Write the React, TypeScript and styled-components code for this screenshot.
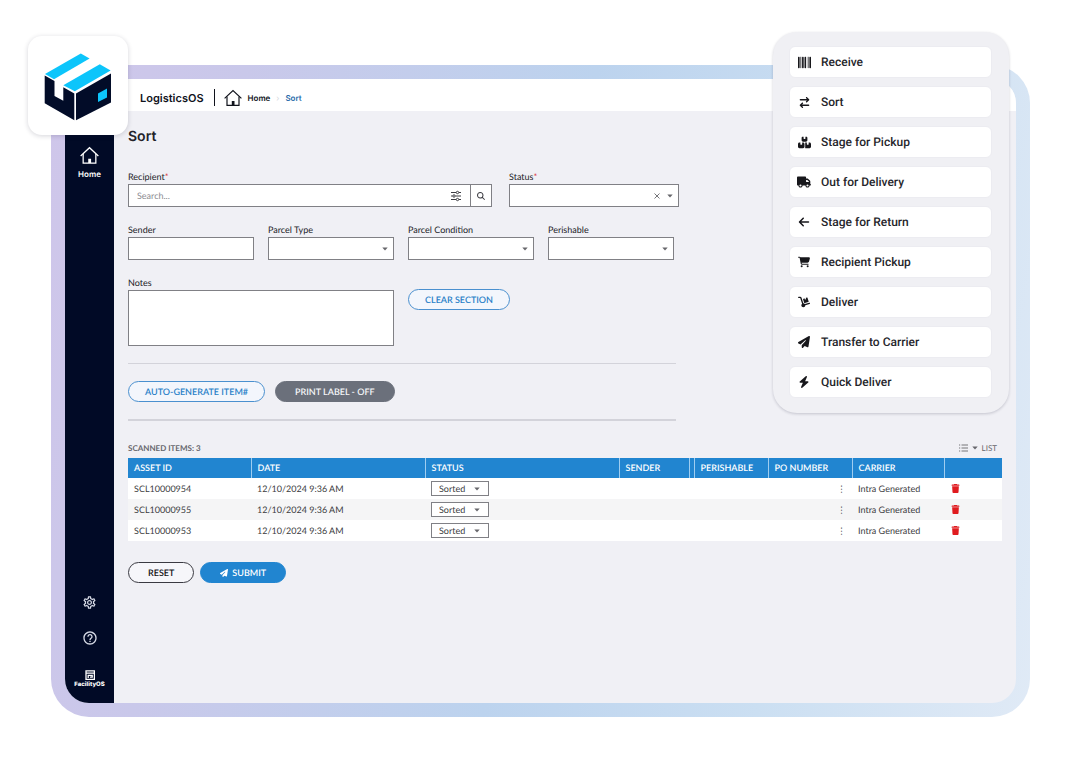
import React from "react";
import styled, { createGlobalStyle } from "styled-components";
import {
  FaArrowLeft,
  FaArrowRightArrowLeft,
  FaBarcode,
  FaBolt,
  FaBoxesStacked,
  FaCartShopping,
  FaDolly,
  FaMagnifyingGlass,
  FaPaperPlane,
  FaTrash,
  FaTruck,
} from "react-icons/fa6";
import { MdHelpOutline, MdOutlineSettings } from "react-icons/md";

const GlobalStyle = createGlobalStyle`
  *, *::before, *::after { box-sizing: border-box; }
  body {
    margin: 0;
    background: #fff;
    color: #2b2b30;
    font-family: Lato, "Liberation Sans", sans-serif;
    font-size: 9px;
    line-height: 12px;
    text-rendering: geometricPrecision;
  }
  button, input, select, textarea {
    font: inherit;
    color: inherit;
    margin: 0;
    border-radius: 0;
    text-rendering: inherit;
  }
  button { cursor: pointer; }
`;

const Page = styled.div`
  position: relative;
  min-height: 100vh;
  display: flex;
  padding: 65px 52px 64px 51px;
`;

const Frame = styled.div`
  flex: 1;
  display: flex;
  padding: 14px;
  border-radius: 38px;
  background: linear-gradient(100deg, #cfc6ea 0%, #c9c8ea 18%, #bcd3ee 50%, #cbdff2 75%, #e0eaf6 100%);
`;

const Screen = styled.div`
  flex: 1;
  min-width: 0;
  display: flex;
  overflow: hidden;
  border-radius: 24px;
  background: #f0f0f5;
`;

const Sidebar = styled.nav`
  width: 49px;
  flex: none;
  display: flex;
  flex-direction: column;
  align-items: center;
  padding: 67px 0 13px;
  background: #010a26;
  color: #fff;
  font-family: Inter, sans-serif;
`;

const SideLink = styled.a`
  display: flex;
  flex-direction: column;
  align-items: center;
  gap: 3px;
  color: #fff;
  font-weight: 600;
  font-size: 8px;
  text-decoration: none;
`;

const SideFooter = styled.div`
  margin-top: auto;
  display: flex;
  flex-direction: column;
  align-items: center;
  gap: 20px;
`;

const SideButton = styled.button`
  display: flex;
  padding: 0;
  border: 0;
  background: none;
  color: #d5d9e4;
`;

const Brand = styled.div`
  display: flex;
  flex-direction: column;
  align-items: center;
  margin-top: 4px;
  font-size: 6px;
  font-weight: 800;
  line-height: 10px;
`;

const Main = styled.div`
  flex: 1;
  min-width: 0;
`;

const TopBar = styled.header`
  display: flex;
  align-items: center;
  height: 32px;
  padding: 5px 26px 0;
  background: #fff;
  color: #10131c;
  font-family: Inter, sans-serif;
`;

const Product = styled.span`
  padding-right: 10px;
  font-size: 11px;
  font-weight: 600;
`;

const Crumbs = styled.nav`
  display: flex;
  align-items: center;
  gap: 6px;
  height: 17px;
  padding-left: 9px;
  border-left: 1px solid #10131c;
  font-size: 8px;
  font-weight: 600;
`;

const Crumb = styled.a<{ $current?: boolean }>`
  display: flex;
  align-items: center;
  gap: 6px;
  color: ${(p) => (p.$current ? "#2a6cab" : "#10131c")};
  text-decoration: none;
`;

const Separator = styled.span`
  color: #d5d8de;
  font-weight: 400;
`;

const Content = styled.main`
  padding: 14px 14px 0;
`;

const Title = styled.h1`
  margin: 0 0 24px;
  padding-top: 2px;
  font-family: Inter, sans-serif;
  font-size: 14px;
  font-weight: 600;
  line-height: 20px;
  color: #222228;
`;

const Form = styled.form`
  width: 552px;
  max-width: 100%;
`;

const Row = styled.div<{ $gap: number }>`
  display: flex;
  gap: ${(p) => p.$gap}px;
  margin-bottom: 17px;
`;

const Field = styled.div<{ $width: number }>`
  width: ${(p) => p.$width}px;
  display: flex;
  flex-direction: column;
  gap: 1px;
`;

const Label = styled.label`
  color: #222228;
`;

const Required = styled.span`
  color: #d9363a;
`;

const ControlBox = styled.div`
  position: relative;
  display: flex;
  align-items: center;
  height: 23px;
  border: 1px solid #808085;
  background: #fff;
`;

const TextInput = styled.input`
  flex: 1;
  min-width: 0;
  height: 100%;
  padding: 0 8px;
  border: 0;
  background: none;
  &::placeholder { color: #8c8c92; }
`;

const IconButton = styled.button<{ $divided?: boolean }>`
  position: relative;
  display: flex;
  align-items: center;
  justify-content: center;
  width: ${(p) => (p.$divided ? 21 : 28)}px;
  height: 100%;
  padding: 0;
  border: 0;
  border-left: ${(p) => (p.$divided ? "1px solid #808085" : "0")};
  background: none;
  color: #3c3c42;
`;

const Select = styled.select<{ $pad: number }>`
  position: absolute;
  inset: 0;
  width: 100%;
  height: 100%;
  padding: 0 ${(p) => p.$pad}px;
  border: 0;
  background: none;
  appearance: none;
`;

const ControlIcons = styled.span<{ $inset?: number }>`
  position: relative;
  display: flex;
  align-items: center;
  gap: 7px;
  margin-left: auto;
  padding-right: ${(p) => p.$inset ?? 5}px;
  color: #66666b;
  pointer-events: none;
`;

const ClearButton = styled.button`
  display: flex;
  padding: 0;
  border: 0;
  background: none;
  color: inherit;
  pointer-events: auto;
`;

const Notes = styled.textarea`
  display: block;
  height: 56px;
  padding: 4px 8px;
  border: 1px solid #808085;
  background: #fff;
  resize: none;
`;

const tones = {
  outline: { bg: "#f3f6fc", fg: "#2a81c8", line: "#4a90cf" },
  muted: { bg: "#6b707b", fg: "#f4f5f8", line: "#6b707b" },
  plain: { bg: "#f6f6fa", fg: "#111114", line: "#3a3a42" },
  primary: { bg: "#2185d0", fg: "#ffffff", line: "#2185d0" },
};

const Pill = styled.button<{ $tone: keyof typeof tones; $compact?: boolean }>`
  display: flex;
  align-items: center;
  gap: 4px;
  height: 21px;
  padding: 0 ${(p) => (p.$compact ? 16 : 19)}px;
  border: 1px solid ${(p) => tones[p.$tone].line};
  border-radius: 11px;
  background: ${(p) => tones[p.$tone].bg};
  color: ${(p) => tones[p.$tone].fg};
  font-weight: 600;
  white-space: nowrap;
`;

const NotesAction = styled.div`
  padding-top: 12px;
`;

const LabelActions = styled.div`
  display: flex;
  gap: 10px;
  width: 548px;
  max-width: 100%;
  padding: 17px 0;
  border-top: 1px solid #d3d3da;
  border-bottom: 2px solid #d3d3da;
`;

const TableHead = styled.div`
  display: flex;
  justify-content: space-between;
  margin-top: 21px;
  padding: 0 5px 4px 0;
  color: #66666c;
`;

const Count = styled.h2`
  margin: 0;
  font: inherit;
  font-size: 8px;
  font-weight: 700;
`;

const ViewButton = styled.button`
  display: flex;
  align-items: center;
  gap: 4px;
  padding: 0;
  border: 0;
  background: none;
  font-size: 8px;
`;

const Table = styled.table`
  width: 100%;
  table-layout: fixed;
  border-collapse: collapse;
  color: #3b3b40;
`;

const Th = styled.th`
  height: 20px;
  padding: 0 6px;
  border-left: 1px solid #9fcdf0;
  background: #2185d0;
  color: #fff;
  font-weight: 600;
  text-align: left;
  white-space: nowrap;
  &:first-child { border-left: 0; }
`;

const BodyRow = styled.tr`
  background: #fff;
  &:nth-child(even) { background: #f5f5f6; }
`;

const Td = styled.td<{ $right?: boolean }>`
  height: 21px;
  padding: 0 6px;
  text-align: ${(p) => (p.$right ? "right" : "left")};
  white-space: nowrap;
`;

const StatusBox = styled(ControlBox)`
  width: 58px;
  height: 15px;
`;

const DeleteButton = styled.button`
  display: flex;
  padding: 0 1px;
  border: 0;
  background: none;
  color: #e01b1f;
`;

const FormActions = styled.div`
  display: flex;
  gap: 6px;
  padding: 21px 0;
`;

const LogoCard = styled.div`
  position: absolute;
  left: 28px;
  top: 36px;
  width: 100px;
  height: 99px;
  border-radius: 14px;
  background: #fff;
  box-shadow: 0 1px 5px rgba(20, 20, 50, 0.18);
`;

const ActionPanel = styled.div`
  position: absolute;
  top: 32px;
  right: 72px;
  width: 236px;
  display: grid;
  gap: 8px;
  padding: 14px 17px 15px 16px;
  border-radius: 24px;
  background: #f0f0f4;
  box-shadow: 0 1px 3px rgba(20, 20, 50, 0.2);
`;

const ActionButton = styled.button`
  display: flex;
  align-items: center;
  gap: 10px;
  height: 32px;
  padding: 0 7px;
  border: 1px solid #ececf1;
  background: #fff;
  color: #26262b;
  font-family: Roboto, sans-serif;
  font-size: 12px;
  font-weight: 500;
  && { border-radius: 6px; }
`;

const ActionIcon = styled.span`
  display: flex;
  justify-content: center;
  width: 14px;
  color: #17171b;
`;

const Caret = () => (
  <svg width="6" height="4" viewBox="0 0 6 4" aria-hidden="true">
    <path d="M.3.5h5.400L3 3.600z" fill="currentColor" />
  </svg>
);

const HouseIcon = ({ size }: { size: number }) => (
  <svg width={size} height={size} viewBox="0 0 18 18" fill="none" stroke="currentColor" strokeWidth="1.2" aria-hidden="true">
    <path d="M.6 9.400 9 1.600l8.400 7.800" />
    <path d="M3 7.600v8.700h12V7.600" />
    <path d="M7.800 12h2.700v4H7.800z" fill="currentColor" stroke="none" />
  </svg>
);

const SlidersIcon = () => (
  <svg width="12" height="12" viewBox="0 0 12 12" fill="none" stroke="currentColor" aria-hidden="true">
    <path d="M1 2.500h5M9 2.500h2M1 6h1.500M5.500 6H11M1 9.500h5M9 9.500h2" />
    <circle cx="7.500" cy="2.500" r="1.200" />
    <circle cx="4" cy="6" r="1.200" />
    <circle cx="7.500" cy="9.500" r="1.200" />
  </svg>
);

const CrossIcon = () => (
  <svg width="6" height="6" viewBox="0 0 6 6" stroke="currentColor" strokeWidth=".9" aria-hidden="true">
    <path d="m.5.5 5 5m0-5-5 5" />
  </svg>
);

const ListIcon = () => (
  <svg width="9" height="8" viewBox="0 0 9 8" stroke="currentColor" strokeWidth=".9" aria-hidden="true">
    <path d="M0 1h1.200M2.500 1H9M0 4h1.200M2.500 4H9M0 7h1.200M2.500 7H9" />
  </svg>
);

const BoxLogo = () => (
  <svg width="100" height="99" viewBox="0 0 100 99" role="img" aria-label="LogisticsOS logo">
    <path d="M17 38 52.800 17.600 61.600 22.600 26 43.300z" fill="#0cc5fb" />
    <path d="M35.300 49.200 71.800 28.200 82.600 34.400 46.800 55.200z" fill="#0cc5fb" />
    <path d="M16.700 39.600 26.500 45V60L35.300 64.700V51.200L46.300 57.500V84.300L16.700 67.300z" fill="#020c28" />
    <path d="M48 57.500 83 37.500V66.500L48 84.300z" fill="#020c28" />
    <path d="M70 57.500 79 52.500V61.500L70 66z" fill="#0cc5fb" />
  </svg>
);

const FacilityMark = () => (
  <svg width="10" height="10" viewBox="0 0 10 10" fill="none" stroke="#fff" strokeWidth="1.300" aria-hidden="true">
    <path d="M1 10V.8h8.400v8.600H1M1 3.200h8.400M3.200 8V5.400h4v1.800H5" />
  </svg>
);

const actions = [
  { label: "Receive", icon: <FaBarcode size={13} /> },
  { label: "Sort", icon: <FaArrowRightArrowLeft size={11} /> },
  { label: "Stage for Pickup", icon: <FaBoxesStacked size={13} /> },
  { label: "Out for Delivery", icon: <FaTruck size={14} /> },
  { label: "Stage for Return", icon: <FaArrowLeft size={12} /> },
  { label: "Recipient Pickup", icon: <FaCartShopping size={12} /> },
  { label: "Deliver", icon: <FaDolly size={12} /> },
  { label: "Transfer to Carrier", icon: <FaPaperPlane size={12} /> },
  { label: "Quick Deliver", icon: <FaBolt size={12} /> },
];

const columns = [
  { name: "ASSET ID", width: 123 },
  { name: "DATE", width: 174 },
  { name: "STATUS", width: 194 },
  { name: "SENDER", width: 70 },
  { name: "", width: 5 },
  { name: "PERISHABLE", width: 74 },
  { name: "PO NUMBER", width: 84 },
  { name: "CARRIER", width: 92 },
  { name: "", width: 58 },
];

const items = ["SCL10000954", "SCL10000955", "SCL10000953"];

const DropDown = ({ id, label }: { id: string; label: string }) => (
  <Field $width={126}>
    <Label htmlFor={id}>{label}</Label>
    <ControlBox>
      <Select id={id} $pad={8} />
      <ControlIcons>
        <Caret />
      </ControlIcons>
    </ControlBox>
  </Field>
);

export default function App() {
  return (
    <>
      <GlobalStyle />
      <Page>
        <Frame>
          <Screen>
            <Sidebar aria-label="Main">
              <SideLink href="#home">
                <HouseIcon size={19} />
                Home
              </SideLink>
              <SideFooter>
                <SideButton aria-label="Settings">
                  <MdOutlineSettings size={15} />
                </SideButton>
                <SideButton aria-label="Help">
                  <MdHelpOutline size={16} />
                </SideButton>
                <Brand>
                  <FacilityMark />
                  FacilityOS
                </Brand>
              </SideFooter>
            </Sidebar>
            <Main>
              <TopBar>
                <Product>LogisticsOS</Product>
                <Crumbs aria-label="Breadcrumb">
                  <Crumb href="#home">
                    <HouseIcon size={18} />
                    Home
                  </Crumb>
                  <Separator>›</Separator>
                  <Crumb href="#sort" $current>
                    Sort
                  </Crumb>
                </Crumbs>
              </TopBar>
              <Content>
                <Title>Sort</Title>
                <Form onSubmit={(e) => e.preventDefault()}>
                  <Row $gap={17}>
                    <Field $width={364}>
                      <Label htmlFor="recipient">
                        Recipient<Required>*</Required>
                      </Label>
                      <ControlBox>
                        <TextInput id="recipient" placeholder="Search..." />
                        <IconButton type="button" aria-label="Filters">
                          <SlidersIcon />
                        </IconButton>
                        <IconButton type="button" aria-label="Search" $divided>
                          <FaMagnifyingGlass size={8} />
                        </IconButton>
                      </ControlBox>
                    </Field>
                    <Field $width={170}>
                      <Label htmlFor="status">
                        Status<Required>*</Required>
                      </Label>
                      <ControlBox>
                        <Select id="status" $pad={8} />
                        <ControlIcons>
                          <ClearButton type="button" aria-label="Clear status">
                            <CrossIcon />
                          </ClearButton>
                          <Caret />
                        </ControlIcons>
                      </ControlBox>
                    </Field>
                  </Row>
                  <Row $gap={14}>
                    <Field $width={126}>
                      <Label htmlFor="sender">Sender</Label>
                      <ControlBox>
                        <TextInput id="sender" />
                      </ControlBox>
                    </Field>
                    <DropDown id="type" label="Parcel Type" />
                    <DropDown id="condition" label="Parcel Condition" />
                    <DropDown id="perishable" label="Perishable" />
                  </Row>
                  <Row $gap={14}>
                    <Field $width={266}>
                      <Label htmlFor="notes">Notes</Label>
                      <Notes id="notes" />
                    </Field>
                    <NotesAction>
                      <Pill type="button" $tone="outline" $compact>
                        CLEAR SECTION
                      </Pill>
                    </NotesAction>
                  </Row>
                  <LabelActions>
                    <Pill type="button" $tone="outline" $compact>
                      AUTO-GENERATE ITEM#
                    </Pill>
                    <Pill type="button" $tone="muted">
                      PRINT LABEL - OFF
                    </Pill>
                  </LabelActions>
                </Form>
                <TableHead>
                  <Count>SCANNED ITEMS: 3</Count>
                  <ViewButton type="button">
                    <ListIcon />
                    <Caret />
                    LIST
                  </ViewButton>
                </TableHead>
                <Table>
                  <colgroup>
                    {columns.map((c, i) => (
                      <col key={i} width={c.width} />
                    ))}
                  </colgroup>
                  <thead>
                    <tr>
                      {columns.map((c, i) => (
                        <Th key={i}>{c.name}</Th>
                      ))}
                    </tr>
                  </thead>
                  <tbody>
                    {items.map((id) => (
                      <BodyRow key={id}>
                        <Td>{id}</Td>
                        <Td>12/10/2024 9:36 AM</Td>
                        <Td>
                          <StatusBox>
                            <Select $pad={7} aria-label={`Status of ${id}`}>
                              <option>Sorted</option>
                            </Select>
                            <ControlIcons $inset={8}>
                              <Caret />
                            </ControlIcons>
                          </StatusBox>
                        </Td>
                        <Td />
                        <Td />
                        <Td />
                        <Td $right>⋮</Td>
                        <Td>Intra Generated</Td>
                        <Td>
                          <DeleteButton type="button" aria-label={`Delete ${id}`}>
                            <FaTrash size={9} />
                          </DeleteButton>
                        </Td>
                      </BodyRow>
                    ))}
                  </tbody>
                </Table>
                <FormActions>
                  <Pill type="reset" $tone="plain">
                    RESET
                  </Pill>
                  <Pill type="submit" $tone="primary">
                    <FaPaperPlane size={8} />
                    SUBMIT
                  </Pill>
                </FormActions>
              </Content>
            </Main>
          </Screen>
        </Frame>
        <LogoCard>
          <BoxLogo />
        </LogoCard>
        <ActionPanel>
          {actions.map((a) => (
            <ActionButton key={a.label} type="button">
              <ActionIcon>{a.icon}</ActionIcon>
              {a.label}
            </ActionButton>
          ))}
        </ActionPanel>
      </Page>
    </>
  );
}
